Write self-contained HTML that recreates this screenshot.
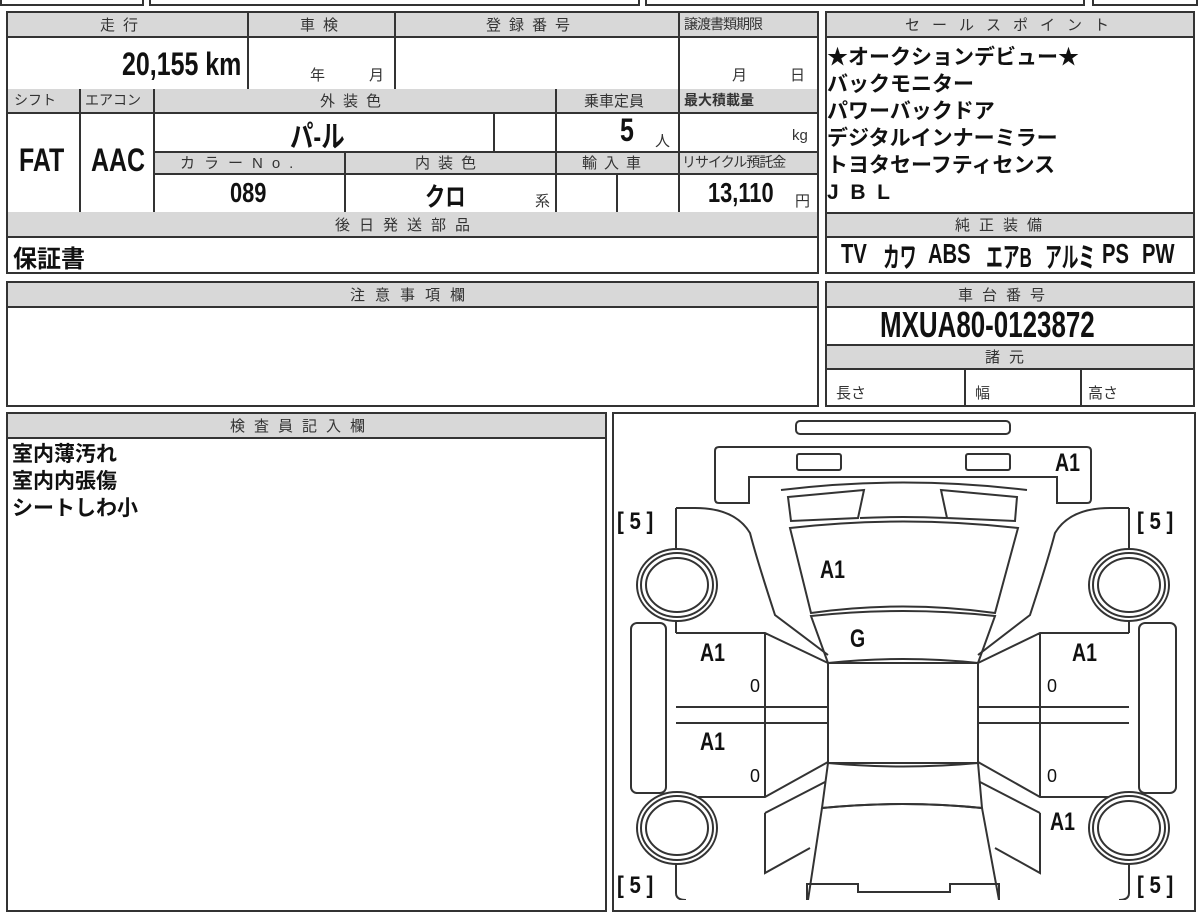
<!DOCTYPE html>
<html><head><meta charset="utf-8"><style>
*{margin:0;padding:0;box-sizing:border-box}
body{width:1200px;height:900px;background:#fff;position:relative;overflow:hidden;font-family:"Liberation Sans","Noto Sans CJK JP",sans-serif;color:#111}
.b{position:absolute;border:2px solid #333;background:#fff}
.h{position:absolute;background:#d8d8d8;font-size:15px;color:#333;text-align:center;letter-spacing:6px;line-height:24px;border-bottom:2px solid #333}
.l{position:absolute;background:#333}
.t{position:absolute;white-space:nowrap;font-family:"Liberation Sans","Noto Sans CJK JP",sans-serif}
.bd{font-weight:bold;transform-origin:left center;transform:scaleX(.78)}
.s{font-size:15px;color:#333}
.eq{position:absolute;top:238px;font-size:28px;font-weight:bold;white-space:nowrap;transform-origin:left center;transform:scaleX(.72)}
.eqk{position:absolute;top:236px;font-size:28px;font-weight:bold;white-space:nowrap;transform-origin:left center;transform:scaleX(.6)}
</style></head><body>
<div class="b" style="left:0;top:-4px;width:144px;height:10px"></div>
<div class="b" style="left:149px;top:-4px;width:491px;height:10px"></div>
<div class="b" style="left:645px;top:-4px;width:440px;height:10px"></div>
<div class="b" style="left:1092px;top:-4px;width:106px;height:10px"></div>

<div class="b" style="left:6px;top:11px;width:813px;height:263px"></div>
<div class="h" style="left:8px;top:13px;width:809px;height:25px"></div>
<div class="h" style="left:8px;top:89px;width:809px;height:25px"></div>
<div class="h" style="left:154px;top:151px;width:663px;height:24px"></div>
<div class="h" style="left:8px;top:212px;width:809px;height:26px"></div>
<div class="l" style="left:154px;top:151px;width:663px;height:2px"></div>
<div class="l" style="left:247px;top:13px;width:2px;height:76px"></div>
<div class="l" style="left:394px;top:13px;width:2px;height:76px"></div>
<div class="l" style="left:678px;top:13px;width:2px;height:199px"></div>
<div class="l" style="left:79px;top:89px;width:2px;height:123px"></div>
<div class="l" style="left:153px;top:89px;width:2px;height:123px"></div>
<div class="l" style="left:555px;top:89px;width:2px;height:123px"></div>
<div class="l" style="left:493px;top:113px;width:2px;height:38px"></div>
<div class="l" style="left:344px;top:151px;width:2px;height:61px"></div>
<div class="l" style="left:616px;top:174px;width:2px;height:38px"></div>
<span class="t s" style="left:100px;top:14px;letter-spacing:8px">走行</span>
<span class="t s" style="left:300px;top:14px;letter-spacing:8px">車検</span>
<span class="t s" style="left:486px;top:14px;letter-spacing:8px">登録番号</span>
<span class="t s" style="left:684px;top:14px;letter-spacing:-1px;font-size:14px">譲渡書類期限</span>
<span class="t bd" style="left:122px;top:46px;font-size:32px">20,155 km</span>
<span class="t s" style="left:310px;top:64px">年</span><span class="t s" style="left:369px;top:64px">月</span>
<span class="t s" style="left:732px;top:64px">月</span><span class="t s" style="left:790px;top:64px">日</span>
<span class="t s" style="left:14px;top:90px;font-size:14px">シフト</span>
<span class="t s" style="left:85px;top:90px;font-size:14px">エアコン</span>
<span class="t s" style="left:320px;top:90px;letter-spacing:8px">外装色</span>
<span class="t s" style="left:584px;top:90px">乗車定員</span>
<span class="t s" style="left:684px;top:90px;font-size:14px;font-weight:bold">最大積載量</span>
<span class="t bd" style="left:19px;top:142px;font-size:32px">FAT</span>
<span class="t bd" style="left:91px;top:142px;font-size:32px">AAC</span>
<span class="t bd" style="left:290px;top:112px;font-size:30px">パ-ル</span>
<span class="t bd" style="left:620px;top:112px;font-size:32px">5</span><span class="t s" style="left:655px;top:130px">人</span>
<span class="t s" style="left:792px;top:127px">kg</span>
<span class="t s" style="left:180px;top:152px;letter-spacing:9px">カラーNo.</span>
<span class="t s" style="left:415px;top:152px;letter-spacing:8px">内装色</span>
<span class="t s" style="left:582px;top:152px;letter-spacing:7px">輸入車</span>
<span class="t s" style="left:682px;top:152px;font-size:14px;letter-spacing:-1px">リサイクル預託金</span>
<span class="t bd" style="left:230px;top:177px;font-size:28px">089</span>
<span class="t bd" style="left:425px;top:177px;font-size:26px">クロ</span>
<span class="t s" style="left:535px;top:190px">系</span>
<span class="t bd" style="left:708px;top:177px;font-size:28px">13,110</span><span class="t s" style="left:795px;top:190px">円</span>
<span class="t s" style="left:335px;top:214px;letter-spacing:9px">後日発送部品</span>
<span class="t" style="left:13px;top:239px;font-size:24px;font-weight:bold">保証書</span>

<div class="b" style="left:825px;top:11px;width:370px;height:263px"></div>
<div class="h" style="left:827px;top:13px;width:366px;height:25px"></div>
<div class="h" style="left:827px;top:212px;width:366px;height:26px"></div>
<div class="l" style="left:827px;top:212px;width:366px;height:2px"></div>
<span class="t s" style="left:905px;top:14px;letter-spacing:12px">セールスポイント</span>
<div class="t" style="left:827px;top:44px;font-size:21px;font-weight:bold;line-height:27px">★オークションデビュー★<br>バックモニター<br>パワーバックドア<br>デジタルインナーミラー<br>トヨタセーフティセンス<br>J&nbsp;&nbsp;B&nbsp;&nbsp;L</div>
<span class="t s" style="left:955px;top:214px;letter-spacing:9px">純正装備</span>
<span class="eq" style="left:841px">TV</span>
<span class="eqk" style="left:883px">カワ</span>
<span class="eq" style="left:928px">ABS</span>
<span class="eqk" style="left:986px">エアB</span>
<span class="eqk" style="left:1045px">アルミ</span>
<span class="eq" style="left:1102px">PS</span>
<span class="eq" style="left:1142px">PW</span>

<div class="b" style="left:6px;top:281px;width:813px;height:126px"></div>
<div class="h" style="left:8px;top:283px;width:809px;height:25px"></div>
<span class="t s" style="left:350px;top:284px;letter-spacing:10px">注意事項欄</span>
<div class="b" style="left:825px;top:281px;width:370px;height:126px"></div>
<div class="h" style="left:827px;top:283px;width:366px;height:25px"></div>
<div class="h" style="left:827px;top:344px;width:366px;height:26px"></div>
<div class="l" style="left:827px;top:344px;width:366px;height:2px"></div>
<div class="l" style="left:964px;top:369px;width:2px;height:36px"></div>
<div class="l" style="left:1080px;top:369px;width:2px;height:36px"></div>
<span class="t s" style="left:958px;top:284px;letter-spacing:9px">車台番号</span>
<span class="t bd" style="left:880px;top:304px;font-size:36px;transform:scaleX(.72)">MXUA80-0123872</span>
<span class="t s" style="left:985px;top:346px;letter-spacing:9px">諸元</span>
<span class="t s" style="left:836px;top:382px">長さ</span>
<span class="t s" style="left:975px;top:382px">幅</span>
<span class="t s" style="left:1088px;top:382px">高さ</span>

<div class="b" style="left:6px;top:412px;width:601px;height:500px"></div>
<div class="h" style="left:8px;top:414px;width:597px;height:25px"></div>
<span class="t s" style="left:230px;top:415px;letter-spacing:9px">検査員記入欄</span>
<div class="t" style="left:12px;top:441px;font-size:21px;font-weight:bold;line-height:27px">室内薄汚れ<br>室内内張傷<br>シートしわ小</div>

<div class="b" style="left:612px;top:412px;width:584px;height:500px"></div>
<svg style="position:absolute;left:0;top:0" width="1200" height="900" fill="none" stroke="#333" stroke-width="2">
<rect x="796" y="421" width="214" height="13" rx="4"/>
<path d="M749 503 H719 q-4 0-4-4 V451 q0-4 4-4 H1087 q4 0 4 4 V499 q0 4-4 4 H1057 V477 H749 Z"/>
<rect x="797" y="454" width="44" height="16" rx="2"/><rect x="966" y="454" width="44" height="16" rx="2"/>
<path d="M781 490 Q903 475 1027 490"/>
<path d="M788 497 L864 490 L858 518 L791 521 Z"/><path d="M941 490 L1017 497 L1015 521 L947 518 Z"/>
<path d="M860 518 Q903 516 946 518"/>
<path d="M790 528 Q903 515 1018 528 L995 613 Q903 600 811 613 Z"/>
<path d="M811 616 Q903 606 995 616 L978 663 Q903 655 828 663 Z"/>
<rect x="828" y="663" width="150" height="100"/>
<path d="M828 763 Q903 770 978 763 L982 808 Q903 800 822 808 Z"/>
<path d="M822 808 Q903 800 982 808 L999 900 M822 808 L808 900"/>
<path d="M676 508 H695 q40 0 55 25 Q757 560 775 615 L828 655"/>
<path d="M1129 508 H1110 q-40 0-55 25 Q1048 560 1030 615 L978 655"/>
<path d="M676 508 V548 M1129 508 V548 M676 620 V633 M1129 620 V633"/>
<path d="M676 633 H765 L828 663 M676 707 H828 M676 723 H828 M765 633 V797 M676 797 H765 L828 762"/>
<path d="M1129 633 H1040 L978 663 M1129 707 H978 M1129 723 H978 M1040 633 V797 M1129 797 H1040 L978 762"/>
<path d="M765 813 L825 782 M765 813 V873 L810 848"/>
<path d="M1040 813 L980 782 M1040 813 V873 L995 848"/>
<path d="M676 863 V893 q0 7 10 7 M1129 863 V893 q0 7-10 7"/>
<path d="M807 900 V884 H858 V892 H950 V884 H999 V900"/>
<g fill="#fff"><ellipse cx="677" cy="585" rx="40" ry="36"/><ellipse cx="677" cy="585" rx="36" ry="32"/><ellipse cx="677" cy="585" rx="31" ry="27"/>
<ellipse cx="677" cy="828" rx="40" ry="36"/><ellipse cx="677" cy="828" rx="36" ry="32"/><ellipse cx="677" cy="828" rx="31" ry="27"/>
<ellipse cx="1129" cy="585" rx="40" ry="36"/><ellipse cx="1129" cy="585" rx="36" ry="32"/><ellipse cx="1129" cy="585" rx="31" ry="27"/>
<ellipse cx="1129" cy="828" rx="40" ry="36"/><ellipse cx="1129" cy="828" rx="36" ry="32"/><ellipse cx="1129" cy="828" rx="31" ry="27"/></g>
<rect x="631" y="623" width="35" height="170" rx="6"/><rect x="1139" y="623" width="37" height="170" rx="6"/>
</svg>
<span class="t bd" style="left:617px;top:508px;font-size:24px;transform:scaleX(.85)">[ 5 ]</span>
<span class="t bd" style="left:1137px;top:508px;font-size:24px;transform:scaleX(.85)">[ 5 ]</span>
<span class="t bd" style="left:617px;top:872px;font-size:24px;transform:scaleX(.85)">[ 5 ]</span>
<span class="t bd" style="left:1137px;top:872px;font-size:24px;transform:scaleX(.85)">[ 5 ]</span>
<span class="t bd" style="left:1055px;top:449px;font-size:25px">A1</span>
<span class="t bd" style="left:820px;top:556px;font-size:25px">A1</span>
<span class="t bd" style="left:850px;top:625px;font-size:25px">G</span>
<span class="t bd" style="left:700px;top:639px;font-size:25px">A1</span>
<span class="t bd" style="left:1072px;top:639px;font-size:25px">A1</span>
<span class="t bd" style="left:700px;top:728px;font-size:25px">A1</span>
<span class="t bd" style="left:1050px;top:808px;font-size:25px">A1</span>
<span class="t" style="left:750px;top:676px;font-size:18px">0</span>
<span class="t" style="left:1047px;top:676px;font-size:18px">0</span>
<span class="t" style="left:750px;top:766px;font-size:18px">0</span>
<span class="t" style="left:1047px;top:766px;font-size:18px">0</span>
</body></html>
